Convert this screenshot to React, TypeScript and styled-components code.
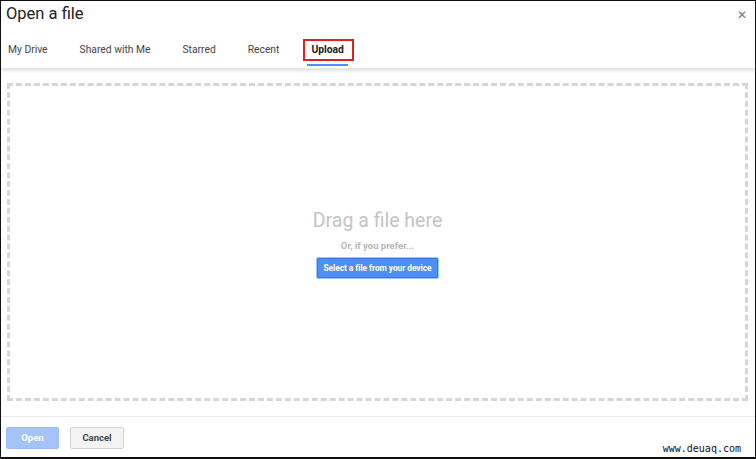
import React from "react";
import styled, { createGlobalStyle } from "styled-components";

const GlobalStyle = createGlobalStyle`
  html, body {
    margin: 0;
    padding: 0;
    background: #ffffff;
  }
  body {
    font-family: Roboto, "Liberation Sans", Arial, sans-serif;
  }
`;

const Dialog = styled.div`
  width: 756px;
  height: 459px;
  box-sizing: border-box;
  border: 1px solid #111;
  border-bottom-width: 2px;
  display: flex;
  flex-direction: column;
  background: #fff;
  position: relative;
`;

const Header = styled.div`
  box-shadow: 0 2px 3px rgba(0, 0, 0, 0.12);
  border-bottom: 1px solid #e6e6e6;
  position: relative;
  z-index: 1;
`;

const TitleRow = styled.div`
  display: flex;
  justify-content: space-between;
  align-items: flex-start;
  height: 34px;
  padding: 2px 8px 0 5px;
`;

const Title = styled.h1`
  margin: 0;
  font-size: 16.5px;
  font-weight: 400;
  color: #222;
  line-height: 22px;
`;

const Close = styled.span`
  font-family: "DejaVu Sans", sans-serif;
  font-size: 12px;
  color: #777;
  line-height: 12px;
  margin-top: 6px;
`;

const Tabs = styled.div`
  display: flex;
  align-items: flex-end;
  height: 31px;
  padding-left: 7px;
`;

const Tab = styled.div<{ $active?: boolean }>`
  position: relative;
  font-size: 10.3px;
  font-weight: ${(p) => (p.$active ? 700 : 400)};
  color: ${(p) => (p.$active ? "#222" : "#444")};
  margin-right: ${(p) => (p.$active ? 0 : 32)}px;
  padding: 0 0 12px;
  line-height: 13px;

  &::after {
    content: "";
    display: ${(p) => (p.$active ? "block" : "none")};
    position: absolute;
    left: -4px;
    right: -4px;
    bottom: 2px;
    height: 2px;
    background: #4d90fe;
  }
`;

const Highlight = styled.span`
  position: absolute;
  left: -8px;
  right: -10px;
  top: -4px;
  bottom: 7px;
  border: 2px solid #e02020;
  box-sizing: border-box;
`;

const Body = styled.div`
  flex: 1;
  padding: 14px 7px 15px 6px;
  display: flex;
`;

const DropZone = styled.div`
  flex: 1;
  border: 3px dashed #d6d6d6;
  display: flex;
  flex-direction: column;
  align-items: center;
  justify-content: center;
  padding-top: 3px;
`;

const DragText = styled.div`
  font-size: 19.5px;
  color: #c4c4c4;
  line-height: 22px;
`;

const Prefer = styled.div`
  margin-top: 8px;
  font-size: 9.5px;
  font-weight: 700;
  color: #b8b8b8;
  line-height: 12px;
`;

const SelectButton = styled.button`
  margin-top: 6px;
  background: #4d8ff5;
  border: 1px solid #3079ed;
  border-radius: 1px;
  color: #fff;
  font-family: Roboto, "Liberation Sans", Arial, sans-serif;
  font-size: 8.4px;
  font-weight: 700;
  letter-spacing: -0.05px;
  height: 20px;
  padding: 0 5px;
  box-shadow: 0 0 0 1px #a6c5f7;
`;

const Footer = styled.div`
  border-top: 1px solid #ebebeb;
  height: 40px;
  display: flex;
  align-items: center;
  padding: 0 5px;
  gap: 11px;
  position: relative;
`;

const FooterButton = styled.button<{ $primary?: boolean }>`
  width: ${(p) => (p.$primary ? 53 : 54)}px;
  height: 22px;
  font-family: Roboto, "Liberation Sans", Arial, sans-serif;
  font-size: 9.5px;
  font-weight: 700;
  border-radius: 2px;
  margin-top: 1px;
  color: ${(p) => (p.$primary ? "#fff" : "#444")};
  background: ${(p) => (p.$primary ? "#a4c4f8" : "#f3f3f3")};
  border: 1px solid ${(p) => (p.$primary ? "#9bbdf5" : "#d0d0d0")};
`;

const Watermark = styled.span`
  position: absolute;
  right: 14px;
  bottom: 3px;
  font-family: "DejaVu Sans Mono", monospace;
  font-size: 10px;
  color: #111;
`;

const tabs = ["My Drive", "Shared with Me", "Starred", "Recent"];

export default function App() {
  return (
    <>
      <GlobalStyle />
      <Dialog>
        <Header>
          <TitleRow>
            <Title>Open a file</Title>
            <Close>✕</Close>
          </TitleRow>
          <Tabs>
            {tabs.map((t) => (
              <Tab key={t}>{t}</Tab>
            ))}
            <Tab $active>
              <Highlight />
              Upload
            </Tab>
          </Tabs>
        </Header>
        <Body>
          <DropZone>
            <DragText>Drag a file here</DragText>
            <Prefer>Or, if you prefer...</Prefer>
            <SelectButton>Select a file from your device</SelectButton>
          </DropZone>
        </Body>
        <Footer>
          <FooterButton $primary>Open</FooterButton>
          <FooterButton>Cancel</FooterButton>
          <Watermark>www.deuaq.com</Watermark>
        </Footer>
      </Dialog>
    </>
  );
}
